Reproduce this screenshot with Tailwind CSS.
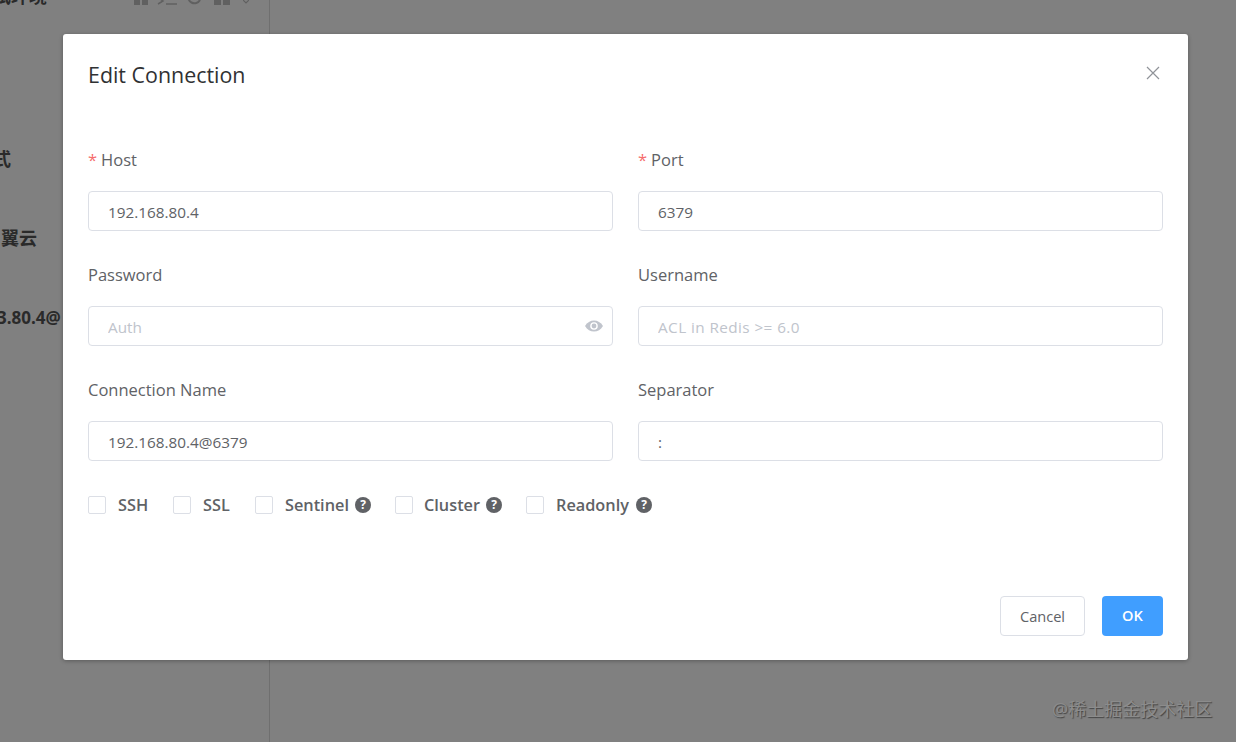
<!DOCTYPE html>
<html lang="en">
<head>
  <meta charset="UTF-8" />
  <title>Edit Connection</title>
  <script src="https://cdn.jsdelivr.net/npm/@tailwindcss/browser@4"></script>
</head>
<body class="h-[742px] w-[1236px] overflow-hidden bg-[#808080] font-['Open_Sans','Noto_Sans_CJK_SC',sans-serif]">
  <div class="relative flex h-full">
    <!-- Sidebar behind the dialog -->
    <aside class="relative h-full w-[270px] border-r border-[#6f6f6f] font-bold text-[18px] text-[#2a2a2a]">
      <div class="absolute left-[-25px] top-[-17px] whitespace-nowrap">测试环境</div>
      <div class="absolute left-[134px] top-[-6px] flex items-center text-[#606060]">
        <svg width="14" height="12" viewBox="0 0 14 12" fill="currentColor"><rect x="0" y="0" width="6" height="11"/><rect x="8" y="0" width="6" height="11"/></svg>
        <svg class="ml-[9px]" width="20" height="12" viewBox="0 0 20 12" fill="none" stroke="currentColor" stroke-width="1.5"><path d="M0 3l6 4-5 3M9 10h11"/></svg>
        <svg class="ml-[10px]" width="14" height="12" viewBox="0 0 14 12" fill="none" stroke="currentColor" stroke-width="2"><path d="M2 0a6 6 0 0 0 11 6"/></svg>
        <svg class="ml-[13px]" width="16" height="12" viewBox="0 0 16 12" fill="currentColor"><rect x="0" y="0" width="7" height="11"/><rect x="9" y="0" width="7" height="11"/></svg>
        <svg class="ml-[13px]" width="6" height="12" viewBox="0 0 6 12" fill="none" stroke="currentColor" stroke-width="1.2"><path d="M0 6l3 3 3-3"/></svg>
      </div>
      <div class="absolute left-[-7px] top-[148px] leading-[22px]">式</div>
      <div class="absolute left-[1px] top-[227px] leading-[22px] whitespace-nowrap">翼云</div>
      <div class="absolute left-[-3px] top-[307px] text-[17px] leading-[22px] whitespace-nowrap">3.80.4@</div>
    </aside>
  </div>

  <!-- Dialog -->
  <div class="absolute left-[63px] top-[34px] flex h-[626px] w-[1125px] flex-col rounded-[3px] bg-white px-[25px] shadow-[0_1px_4px_rgba(0,0,0,0.3)]">
    <header class="flex h-[82px] items-start justify-between pt-[26px]">
      <h2 class="text-[21.4px] leading-[30px] text-[#303133]">Edit Connection</h2>
      <button class="mr-[2px] mt-[5px] text-[#909399]" aria-label="Close">
        <svg width="16" height="16" viewBox="0 0 16 16" fill="none" stroke="currentColor" stroke-width="1.2"><path d="M2 2l12 12M14 2L2 14"/></svg>
      </button>
    </header>

    <form class="mt-[24px] grid grid-cols-2 gap-x-[25px] gap-y-[24px]">
      <div>
        <label class="block h-[51px] text-[16.500px] leading-[40px] text-[#606266]"><span class="mr-[4px] text-[#f56c6c]">*</span>Host</label>
        <input value="192.168.80.4" class="block h-[40px] w-full rounded-[4px] border border-[#dcdfe6] px-[19px] pt-[1px] text-[15.300px] text-[#606266]" />
      </div>
      <div>
        <label class="block h-[51px] text-[16.500px] leading-[40px] text-[#606266]"><span class="mr-[4px] text-[#f56c6c]">*</span>Port</label>
        <input value="6379" class="block h-[40px] w-full rounded-[4px] border border-[#dcdfe6] px-[19px] pt-[1px] text-[15.300px] text-[#606266]" />
      </div>
      <div>
        <label class="block h-[51px] text-[16.500px] leading-[40px] text-[#606266]">Password</label>
        <div class="relative">
          <input placeholder="Auth" class="block h-[40px] w-full rounded-[4px] border border-[#dcdfe6] px-[19px] pt-[1px] text-[15.300px] placeholder:text-[#c0c4cc]" />
          <svg class="absolute right-[10px] top-[12px]" width="18" height="16" viewBox="0 0 18 16" fill="none"><path d="M0 8c2.200-3.800 5.400-5.600 9-5.600s6.800 1.800 9 5.600c-2.200 3.800-5.400 5.600-9 5.600s-6.800-1.800-9-5.600z" fill="#c0c4cc"/><circle cx="9" cy="8" r="3.800" fill="#fff"/><circle cx="9" cy="8" r="2.400" fill="#c0c4cc"/></svg>
        </div>
      </div>
      <div>
        <label class="block h-[51px] text-[16.500px] leading-[40px] text-[#606266]">Username</label>
        <input placeholder="ACL in Redis &gt;= 6.0" class="block h-[40px] w-full rounded-[4px] border border-[#dcdfe6] px-[19px] pt-[1px] text-[15.300px] tracking-[0.42px] placeholder:text-[#c0c4cc]" />
      </div>
      <div>
        <label class="block h-[51px] text-[16.500px] leading-[40px] text-[#606266]">Connection Name</label>
        <input value="192.168.80.4@6379" class="block h-[40px] w-full rounded-[4px] border border-[#dcdfe6] px-[19px] pt-[1px] text-[15.300px] text-[#606266]" />
      </div>
      <div>
        <label class="block h-[51px] text-[16.500px] leading-[40px] text-[#606266]">Separator</label>
        <input value=":" class="block h-[40px] w-full rounded-[4px] border border-[#dcdfe6] px-[19px] pt-[1px] text-[15.300px] text-[#606266]" />
      </div>
    </form>

    <div class="mt-[20px] flex h-[48px] items-center whitespace-nowrap text-[16.300px] font-semibold text-[#606266]">
      <span class="h-[18px] w-[18px] rounded-[2px] border border-[#dcdfe6]"></span><span class="ml-[12px] w-[32px]">SSH</span>
      <span class="ml-[23px] h-[18px] w-[18px] rounded-[2px] border border-[#dcdfe6]"></span><span class="ml-[12px] w-[28px]">SSL</span>
      <span class="ml-[24px] h-[18px] w-[18px] rounded-[2px] border border-[#dcdfe6]"></span><span class="ml-[12px] w-[63px]">Sentinel</span>
      <span class="ml-[7px] flex h-[16px] w-[16px] items-center justify-center rounded-full bg-[#606266] text-[12px] font-bold text-white">?</span>
      <span class="ml-[24px] h-[18px] w-[18px] rounded-[2px] border border-[#dcdfe6]"></span><span class="ml-[11px] w-[55px]">Cluster</span>
      <span class="ml-[7px] flex h-[16px] w-[16px] items-center justify-center rounded-full bg-[#606266] text-[12px] font-bold text-white">?</span>
      <span class="ml-[24px] h-[18px] w-[18px] rounded-[2px] border border-[#dcdfe6]"></span><span class="ml-[12px] w-[73px]">Readonly</span>
      <span class="ml-[7px] flex h-[16px] w-[16px] items-center justify-center rounded-full bg-[#606266] text-[12px] font-bold text-white">?</span>
    </div>

    <footer class="mt-auto mb-[24px] flex justify-end gap-[17px] text-[14.600px]">
      <button class="h-[40px] w-[85px] rounded-[4px] border border-[#dcdfe6] bg-white pt-[1px] font-medium text-[#606266]">Cancel</button>
      <button class="h-[40px] w-[61px] rounded-[4px] bg-[#409eff] font-semibold text-white">OK</button>
    </footer>
  </div>

  <!-- Watermark -->
  <div class="absolute left-[1052px] top-[697px] text-[18px] leading-[24px] text-[#8c8c8c] [text-shadow:1px_1px_1px_#444] whitespace-nowrap">@稀土掘金技术社区</div>
</body>
</html>
